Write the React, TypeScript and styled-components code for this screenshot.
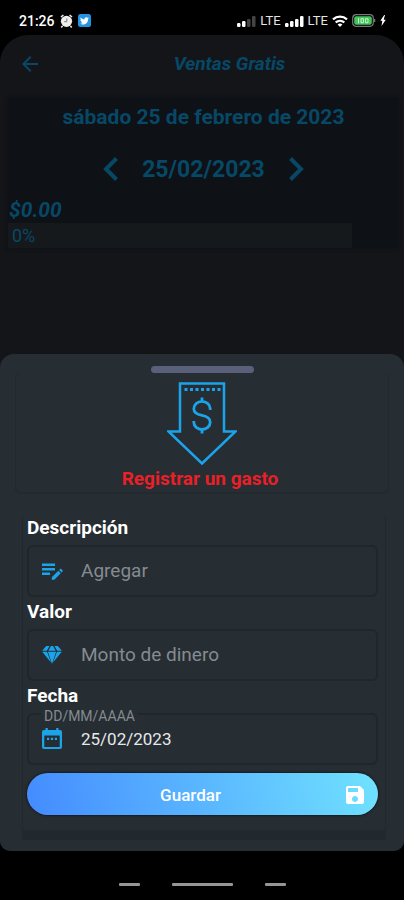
import React from "react";
import styled, { createGlobalStyle } from "styled-components";
import { MdArrowBack, MdSave } from "react-icons/md";

const color = {
  accent: "#1ba4ea",
  dimAccent: "#074867",
  screen: "#131519",
  summary: "#0e1115",
  sheet: "#262d33",
  edge: "#20272c",
};

const GlobalStyle = createGlobalStyle`
  * { box-sizing: border-box; }
  body { margin: 0; background: #000; }
  button, input { font: inherit; }
  h1, h2, p { margin: 0; font: inherit; }
`;

const Page = styled.div`
  display: flex;
  flex-direction: column;
  min-height: 100vh;
  background: #000;
  color: #fff;
  font-family: Roboto, "Liberation Sans", sans-serif;
`;

const StatusBar = styled.header`
  display: flex;
  align-items: center;
  justify-content: space-between;
  height: 35px;
  padding: 6px 18px 0 19px;
  font-size: 14px;
  font-weight: 500;
  line-height: 20px;
`;

const StatusGroup = styled.div<{ $gap: number }>`
  display: flex;
  align-items: center;
  gap: ${(p) => p.$gap}px;
`;

const Network = styled.span`
  font-size: 13px;
  font-weight: 400;
  color: #e4e4e4;
`;

const Screen = styled.main`
  display: flex;
  flex: 1;
  flex-direction: column;
  justify-content: space-between;
  background: ${color.screen};
  border-radius: 28px 28px 10px 10px;
`;

const Backdrop = styled.section`
  padding: 0 5px 24px 8px;
  color: ${color.dimAccent};
`;

const AppBar = styled.div`
  display: grid;
  grid-template-columns: 44px 1fr;
  align-items: center;
  height: 62px;
  padding: 0 0 4px;
`;

const IconButton = styled.button`
  display: flex;
  align-items: center;
  justify-content: center;
  width: 44px;
  height: 44px;
  padding: 0;
  border: 0;
  background: none;
  color: inherit;
`;

const AppTitle = styled.h1`
  padding-left: 8px;
  font-size: 19px;
  font-style: italic;
  font-weight: 700;
  line-height: 24px;
  text-align: center;
`;

const Summary = styled.div`
  padding-bottom: 1px;
  background: ${color.summary};
  box-shadow: 0 0 3px ${color.summary};
`;

const LongDate = styled.h2`
  padding: 8px 0;
  font-size: 21px;
  font-weight: 700;
  line-height: 24px;
  text-align: center;
`;

const DayPicker = styled.div`
  display: flex;
  align-items: center;
  justify-content: center;
  gap: 9px;
  height: 64px;
  font-size: 23px;
  font-weight: 700;
`;

const Amount = styled.p`
  padding: 0 1px 4px;
  font-size: 21px;
  font-style: italic;
  font-weight: 700;
  line-height: 18px;
`;

const Progress = styled.div`
  width: 88%;
  padding: 1px 4px 0;
  background: #16191c;
  font-size: 18px;
  line-height: 24px;
`;

const Sheet = styled.section`
  display: flex;
  flex-direction: column;
  padding: 12px 15px 11px;
  border-radius: 14px 14px 10px 10px;
  background: ${color.sheet};
`;

const Handle = styled.div`
  align-self: center;
  width: 103px;
  height: 7px;
  border-radius: 4px;
  background: #5b607a;
`;

const Heading = styled.div`
  display: flex;
  flex-direction: column;
  align-items: center;
  padding: 6px 0 1px;
  border: solid #22292f;
  border-width: 0 1px 2px;
  border-radius: 6px;
`;

const HeadingText = styled.h2`
  padding-right: 4px;
  color: #ea2027;
  font-size: 19px;
  font-weight: 700;
  line-height: 24px;
`;

const Form = styled.form`
  margin: 21px 3px 0 7px;
  padding: 0 7px 15px 4px;
  border: solid #22292e;
  border-width: 0 1px 10px;
`;

const Label = styled.label`
  display: block;
  padding-top: 1px;
  font-size: 19px;
  font-weight: 700;
  line-height: 24px;
`;

const Field = styled.div`
  position: relative;
  display: flex;
  align-items: center;
  gap: 17px;
  height: 52px;
  margin-top: 5px;
  padding: 0 11px;
  border: 2px solid ${color.edge};
  border-radius: 6px;
  color: ${color.accent};

  & + label {
    margin-top: 2px;
  }
`;

const TextInput = styled.input<{ $size: number }>`
  flex: 1;
  min-width: 0;
  padding: 0;
  border: 0;
  outline: 0;
  background: none;
  color: #e6e8ea;
  font-size: ${(p) => p.$size}px;
  line-height: 24px;

  &::placeholder {
    color: #858b90;
    opacity: 1;
  }
`;

const Hint = styled.span`
  position: absolute;
  top: -8px;
  left: 12px;
  padding: 0 3px;
  background: ${color.sheet};
  color: #858b90;
  font-size: 14px;
  line-height: 18px;
`;

const SaveButton = styled.button`
  display: grid;
  grid-template-columns: 1fr 24px;
  align-items: center;
  width: 100%;
  height: 42px;
  margin-top: 8px;
  padding: 2px 11px 0 0;
  border: 0;
  border-radius: 21px;
  background: linear-gradient(75deg, #448bff, #70e2ff);
  box-shadow: 0 0 2px 1px #171c20;
  color: #fff;
  font-size: 17px;
  font-weight: 500;
`;

const SaveText = styled.span`
  padding-left: 11px;
`;

const NavBar = styled.nav`
  display: flex;
  align-items: center;
  justify-content: center;
  gap: 32px;
  height: 49px;
  padding-top: 17px;
`;

const NavButton = styled.button<{ $wide?: boolean }>`
  width: ${(p) => (p.$wide ? 61 : 21)}px;
  height: 3px;
  padding: 0;
  border: 0;
  border-radius: 1px;
  background: #959595;
`;

function AlarmIcon() {
  return (
    <svg width="13" height="14" viewBox="0 0 13 14" fill="#eee" aria-hidden="true">
      <circle cx="6.5" cy="7.3" r="5.6" />
      <path d="M1 3 3.4 1M12 3 9.6 1M2.5 12 1.3 13.4M10.5 12l1.2 1.4" stroke="#eee" strokeWidth="1.6" />
      <path d="M6.8 4.5v3.2H4.2" fill="none" stroke="#777" strokeWidth="1" />
    </svg>
  );
}

function BirdIcon() {
  return (
    <svg width="13" height="13" viewBox="0 0 26 26" aria-hidden="true">
      <rect width="26" height="26" rx="5" fill="#2394e0" />
      <path
        fill="#fff"
        d="M22 8.2c-.7.3-1.4.5-2.1.6.8-.5 1.3-1.2 1.6-2-.7.4-1.5.7-2.3.9a3.7 3.7 0 0 0-6.3 3.4C9.8 10.9 7.1 9.5 5.3 7.2c-1 1.7-.5 3.9 1.1 5-.6 0-1.2-.2-1.7-.5 0 1.8 1.3 3.4 3 3.7-.5.2-1.1.2-1.7.1.5 1.5 1.9 2.5 3.5 2.6A7.5 7.5 0 0 1 4 19.6c6.8 4.1 16.3.3 16.2-9.5.7-.5 1.3-1.2 1.8-1.9z"
      />
    </svg>
  );
}

function SignalIcon({ level }: { level: number }) {
  const bars = [4, 6, 8, 11];
  return (
    <svg width="19" height="12" viewBox="0 0 19 12" aria-hidden="true">
      {bars.map((h, i) => (
        <rect key={h} x={i * 5} y={12 - h} width="3.5" height={h} rx="1.2" fill={i < level ? "#fff" : "#444"} />
      ))}
    </svg>
  );
}

function WifiIcon() {
  return (
    <svg width="16" height="12" viewBox="0 0 16 12" fill="none" stroke="#fff" strokeWidth="2.2" aria-hidden="true">
      <path d="M1 4.4c4-3.6 10-3.6 14 0M3.7 7.4c2.5-2.2 6.1-2.2 8.6 0" />
      <path d="M8 12 5.6 9.5c1.4-1.2 3.4-1.2 4.8 0z" fill="#fff" stroke="none" />
    </svg>
  );
}

function BatteryIcon() {
  return (
    <svg width="24" height="13" viewBox="0 0 24 13" role="img" aria-label="100">
      <rect x=".7" y=".7" width="20.6" height="11.6" rx="3.5" fill="none" stroke="#777" strokeWidth="1.2" />
      <rect x="2.2" y="2.2" width="17.6" height="8.6" rx="2" fill="#42c45b" />
      <path d="M22.5 5v3" stroke="#777" strokeWidth="1.5" />
      <path d="M6.5 4.2v5M9 4.7h2.4v4H9zM13.6 4.7H16v4h-2.4z" fill="none" stroke="#c9f3d0" />
    </svg>
  );
}

function BoltIcon() {
  return (
    <svg width="6" height="11" viewBox="0 0 6 11" fill="#fff" aria-hidden="true">
      <path d="M4.2 0 .3 5.8h2L1.5 11 5.8 4.7H3.7L5 0z" />
    </svg>
  );
}

function Chevron({ next }: { next?: boolean }) {
  return (
    <svg width="16" height="24" viewBox="0 0 16 24" fill="none" stroke="currentColor" strokeWidth="4" aria-hidden="true">
      <path d={next ? "M2.5 1.5 13 12 2.5 22.5" : "M13.5 1.5 3 12l10.5 10.5"} />
    </svg>
  );
}

function NoteIcon() {
  return (
    <svg width="24" height="24" viewBox="0 0 24 24" fill="currentColor" aria-hidden="true">
      <path d="M2 4.500h13v2.500H2zM2 9h13v2.500H2zM2 13.500h8V16H2z" />
      <path d="m18.300 11.800 2.500 2.500-6.500 6.400h-2.500v-2.500zM19.100 11l1-1c.3-.3.8-.3 1.100 0l1.400 1.400c.3.3.3.8 0 1.100l-1 1z" />
    </svg>
  );
}

function DiamondIcon() {
  return (
    <svg width="24" height="24" viewBox="0 0 24 24" fill="currentColor" aria-hidden="true">
      <path d="M6.2 3h3.300L6.800 7.800H2.200zM11 3h2l2.700 4.800H8.300zM14.500 3h3.300l4 4.800h-4.600zM2.200 8.700h4.900l3.900 10.800zM7.900 8.700h8.200L12 21zM16.900 8.700h4.900l-8.800 10.800z" />
    </svg>
  );
}

function CalendarIcon() {
  return (
    <svg width="24" height="24" viewBox="0 0 24 24" fill="currentColor" aria-hidden="true">
      <path
        fillRule="evenodd"
        d="M5.500 1h2.300v2h8.400V1h2.300v2H20a2 2 0 0 1 2 2v15a2 2 0 0 1-2 2H4a2 2 0 0 1-2-2V5a2 2 0 0 1 2-2h1.500zM4.300 8.500V20h15.400V8.500z"
      />
      <path d="M7 10.800h2.200V13H7zM10.900 10.800h2.200V13h-2.200zM14.800 10.800H17V13h-2.200z" />
    </svg>
  );
}

function ExpenseIcon() {
  return (
    <svg width="70" height="88" viewBox="0 0 70 88" fill="none" stroke={color.accent} strokeWidth="2.5" aria-hidden="true">
      <path d="M13 4.500h44v48h11.500L35 84.500 1.500 52.500H13z" />
      <path d="M17.500 10.500h36" strokeWidth="3" strokeDasharray="3 2.500" />
      <path
        d="M35 18.500v4M35 50v4.500M43.200 31v-1.200a8.200 7.500 0 0 0-16.400 0c0 4.200 3.300 5.700 8.200 6.600s8.200 3 8.200 6.800a8.200 7.300 0 0 1-16.400 0V42"
        strokeWidth="2.8"
      />
    </svg>
  );
}

export default function App() {
  return (
    <Page>
      <GlobalStyle />
      <StatusBar>
        <StatusGroup $gap={5}>
          <span>21:26</span>
          <AlarmIcon />
          <BirdIcon />
        </StatusGroup>
        <StatusGroup $gap={4}>
          <SignalIcon level={2} />
          <Network>LTE</Network>
          <SignalIcon level={4} />
          <Network>LTE</Network>
          <WifiIcon />
          <BatteryIcon />
          <BoltIcon />
        </StatusGroup>
      </StatusBar>

      <Screen>
        <Backdrop>
          <AppBar>
            <IconButton aria-label="Volver">
              <MdArrowBack size={24} />
            </IconButton>
            <AppTitle>Ventas Gratis</AppTitle>
          </AppBar>
          <Summary>
            <LongDate>sábado 25 de febrero de 2023</LongDate>
            <DayPicker>
              <IconButton aria-label="Día anterior">
                <Chevron />
              </IconButton>
              <span>25/02/2023</span>
              <IconButton aria-label="Día siguiente">
                <Chevron next />
              </IconButton>
            </DayPicker>
            <Amount>$0.00</Amount>
            <Progress>0%</Progress>
          </Summary>
        </Backdrop>

        <Sheet>
          <Handle />
          <Heading>
            <ExpenseIcon />
            <HeadingText>Registrar un gasto</HeadingText>
          </Heading>
          <Form onSubmit={(e) => e.preventDefault()}>
            <Label htmlFor="description">Descripción</Label>
            <Field>
              <NoteIcon />
              <TextInput id="description" $size={19} placeholder="Agregar" />
            </Field>
            <Label htmlFor="value">Valor</Label>
            <Field>
              <DiamondIcon />
              <TextInput id="value" $size={19} placeholder="Monto de dinero" />
            </Field>
            <Label htmlFor="date">Fecha</Label>
            <Field>
              <CalendarIcon />
              <Hint>DD/MM/AAAA</Hint>
              <TextInput id="date" $size={17} defaultValue="25/02/2023" />
            </Field>
            <SaveButton type="submit">
              <SaveText>Guardar</SaveText>
              <MdSave size={24} />
            </SaveButton>
          </Form>
        </Sheet>
      </Screen>

      <NavBar>
        <NavButton aria-label="Recientes" />
        <NavButton $wide aria-label="Inicio" />
        <NavButton aria-label="Atrás" />
      </NavBar>
    </Page>
  );
}
